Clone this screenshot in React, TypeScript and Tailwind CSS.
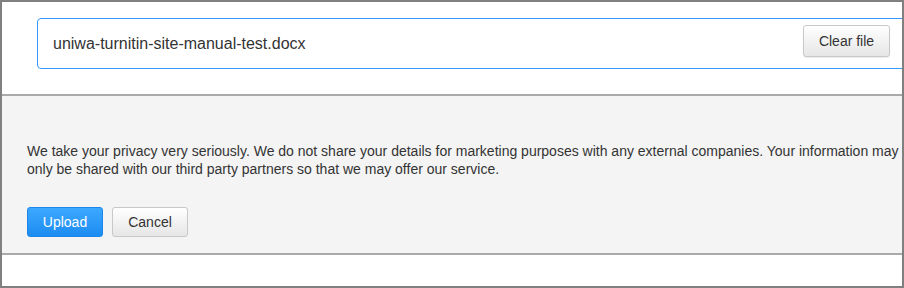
import React, { useState } from 'react';

const App: React.FC = () => {
  const [fileName, setFileName] = useState('uniwa-turnitin-site-manual-test.docx');

  return (
    <div className="w-[904px] h-[288px] overflow-hidden bg-white border-2 border-[#808080] font-['Liberation_Sans',Arial,sans-serif] text-[#333]">
      <div className="w-[940px]">
        {/* File field */}
        <div className="pt-[16px] pb-[25px] px-[35px]">
          <div className="h-[51px] flex items-start justify-between border border-[#3399ff] rounded-[4px] pl-[15px] pr-[16px] bg-white">
            <span className="text-[16px] leading-none mt-[17px]">{fileName}</span>
            <button
              type="button"
              onClick={() => setFileName('')}
              className="mt-[6px] w-[87px] h-[32px] rounded-[3px] border border-[#c8c8c8] bg-gradient-to-b from-white to-[#e6e6e6] text-[14px] text-[#333] shadow-[0_1px_1px_rgba(0,0,0,0.08)]"
            >
              Clear file
            </button>
          </div>
        </div>

        {/* Privacy panel */}
        <div className="border-t-2 border-b-2 border-[#a9a9a9] bg-[#f4f4f4] pt-[46px] pb-[16px] pl-[25px]">
          <p className="text-[14px] leading-[18px] text-[#333]">
            <span className="block whitespace-nowrap">
              We take your privacy very seriously. We do not share your details for marketing purposes with any external companies. Your information may
            </span>
            <span className="block whitespace-nowrap">
              only be shared with our third party partners so that we may offer our service.
            </span>
          </p>
          <div className="flex gap-[9px] mt-[29px]">
            <button
              type="button"
              className="w-[76px] h-[30px] rounded-[3px] border border-[#1c86ea] bg-gradient-to-b from-[#3ca8ff] to-[#1b8cf2] text-white text-[14px]"
            >
              Upload
            </button>
            <button
              type="button"
              className="w-[76px] h-[30px] rounded-[3px] border border-[#c8c8c8] bg-gradient-to-b from-white to-[#e6e6e6] text-[#333] text-[14px]"
            >
              Cancel
            </button>
          </div>
        </div>
      </div>
    </div>
  );
};

export default App;
